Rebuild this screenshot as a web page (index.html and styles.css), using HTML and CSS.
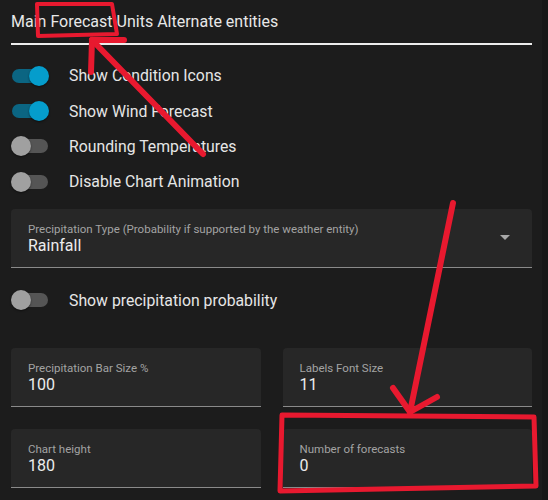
FILE: index.html
```html
<!DOCTYPE html>
<html>
<head>
<meta charset="utf-8">
<link rel="stylesheet" href="styles.css">
</head>
<body>
<div class="layout">
  <main class="content">
    <nav class="tabs">
      <span class="tab">Main</span>
      <span class="tab">Forecast</span>
      <span class="tab">Units</span>
      <span class="tab">Alternate entities</span>
    </nav>

    <div class="switches">
      <div class="switch-row">
        <span class="switch on"><span class="track"></span><span class="knob"></span></span>
        <span class="switch-label">Show Condition Icons</span>
      </div>
      <div class="switch-row">
        <span class="switch on"><span class="track"></span><span class="knob"></span></span>
        <span class="switch-label">Show Wind Forecast</span>
      </div>
      <div class="switch-row">
        <span class="switch"><span class="track"></span><span class="knob"></span></span>
        <span class="switch-label">Rounding Temperatures</span>
      </div>
      <div class="switch-row">
        <span class="switch"><span class="track"></span><span class="knob"></span></span>
        <span class="switch-label">Disable Chart Animation</span>
      </div>
    </div>

    <div class="field select">
      <div class="field-text">
        <span class="field-label">Precipitation Type (Probability if supported by the weather entity)</span>
        <span class="field-value">Rainfall</span>
      </div>
      <span class="arrow"></span>
    </div>

    <div class="switch-row single">
      <span class="switch"><span class="track"></span><span class="knob"></span></span>
      <span class="switch-label">Show precipitation probability</span>
    </div>

    <div class="grid">
      <div class="field">
        <div class="field-text">
          <span class="field-label">Precipitation Bar Size %</span>
          <span class="field-value">100</span>
        </div>
      </div>
      <div class="field">
        <div class="field-text">
          <span class="field-label">Labels Font Size</span>
          <span class="field-value">11</span>
        </div>
      </div>
      <div class="field">
        <div class="field-text">
          <span class="field-label">Chart height</span>
          <span class="field-value">180</span>
        </div>
      </div>
      <div class="field">
        <div class="field-text">
          <span class="field-label">Number of forecasts</span>
          <span class="field-value">0</span>
        </div>
      </div>
    </div>
  </main>
  <div class="scrollbar"></div>
</div>

<svg class="annotations" width="548" height="500" viewBox="0 0 548 500">
  <g fill="none" stroke="#e8192f" stroke-linecap="round" stroke-linejoin="round">
    <polygon points="37,4 112,4 117,34 38,36" stroke-width="4"/>
    <line x1="203" y1="154" x2="92" y2="40" stroke-width="6"/>
    <line x1="91" y1="72" x2="92" y2="40" stroke-width="6"/>
    <line x1="124" y1="40" x2="92" y2="40" stroke-width="6"/>
    <line x1="453" y1="203" x2="410" y2="412" stroke-width="6"/>
    <line x1="393" y1="388" x2="410" y2="412" stroke-width="6"/>
    <line x1="437" y1="397" x2="410" y2="412" stroke-width="6"/>
    <polygon points="282,415 534,417 536,486 280,491" stroke-width="5"/>
  </g>
</svg>
</body>
</html>
```

FILE: styles.css
```css
* { box-sizing: border-box; }

html, body {
  margin: 0;
  padding: 0;
  width: 548px;
  height: 500px;
  overflow: hidden;
  background: #1c1c1c;
  font-family: Roboto, "Liberation Sans", sans-serif;
  color: #e1e1e1;
}

.layout {
  display: flex;
  width: 548px;
  height: 500px;
}

.content {
  flex: 1;
  padding: 0 10px 0 11px;
  display: flex;
  flex-direction: column;
}

.scrollbar {
  width: 6px;
  background: #171717;
}

.tabs {
  display: flex;
  gap: 4px;
  padding-top: 12px;
  height: 45px;
  border-bottom: 2px solid #ececec;
  font-size: 16px;
  color: #e8e8e8;
}

.switches {
  margin-top: 13px;
  display: flex;
  flex-direction: column;
}

.switch-row {
  display: flex;
  align-items: center;
  gap: 20px;
  height: 35.4px;
}

.switch-row.single {
  margin-top: 15px;
}

.switch {
  position: relative;
  width: 38px;
  height: 20px;
  flex: none;
}

.switch .track {
  position: absolute;
  left: 1px;
  top: 3px;
  width: 36px;
  height: 14px;
  border-radius: 7px;
  background: #555555;
}

.switch .knob {
  position: absolute;
  left: 0;
  top: 0;
  width: 20px;
  height: 20px;
  border-radius: 50%;
  background: #a0a0a0;
  box-shadow: 0 1px 2px rgba(0, 0, 0, 0.5);
}

.switch.on .track { background: #0b6582; }
.switch.on .knob { left: 18px; background: #059dcc; }

.switch-label {
  font-size: 15.8px;
  color: #e6e6e6;
}

.field {
  display: flex;
  align-items: center;
  height: 59px;
  background: #272727;
  border-radius: 4px 4px 0 0;
  border-bottom: 1px solid #8a8a8a;
  padding: 0 22px 0 17px;
}

.select {
  margin-top: 9px;
}

.field-text {
  flex: 1;
  display: flex;
  flex-direction: column;
  align-self: flex-start;
  padding-top: 13px;
}

.field-label {
  font-size: 11.5px;
  line-height: 14.5px;
  color: #a3a3a3;
}

.field-value {
  font-size: 16px;
  line-height: 19px;
  color: #ececec;
}

.arrow {
  width: 0;
  height: 0;
  border-left: 5px solid transparent;
  border-right: 5px solid transparent;
  border-top: 5px solid #a8a8a8;
}

.grid {
  margin-top: 30px;
  display: grid;
  grid-template-columns: 1fr 1fr;
  column-gap: 22px;
  row-gap: 22px;
}

.annotations {
  position: absolute;
  left: 0;
  top: 0;
  pointer-events: none;
}
```
